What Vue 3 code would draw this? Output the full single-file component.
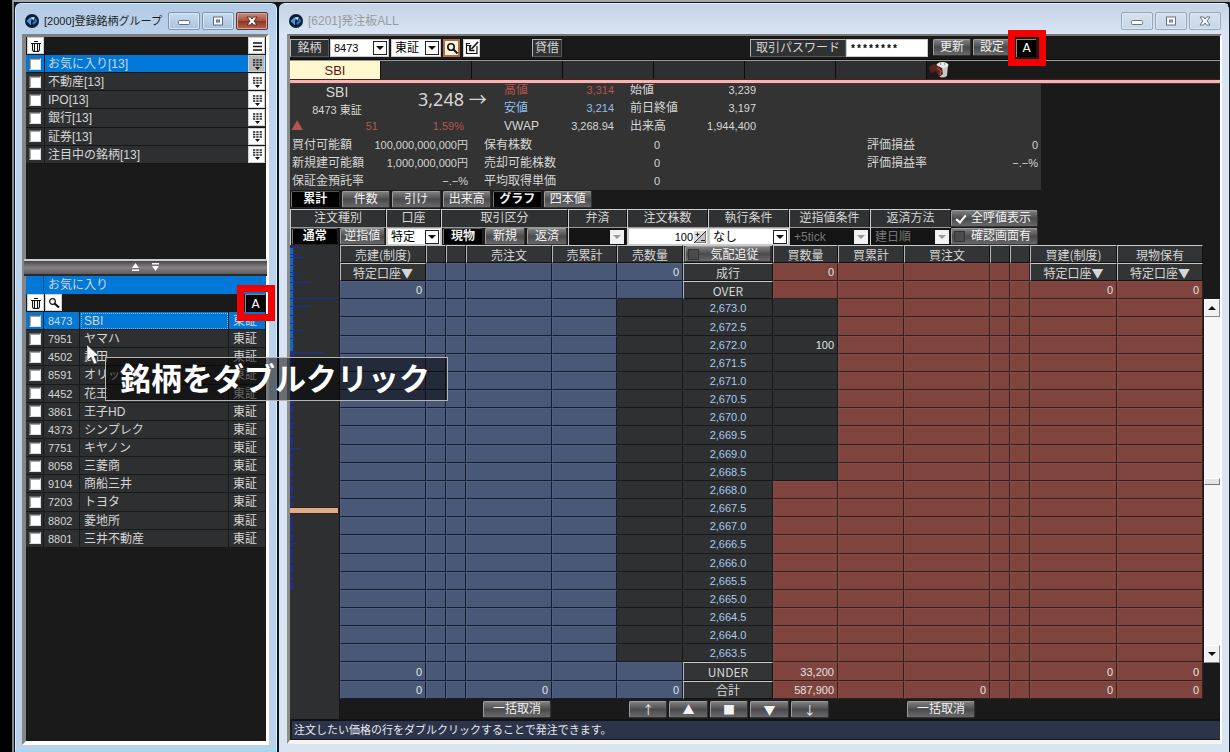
<script setup>
const groups = ['お気に入り[13]', '不動産[13]', 'IPO[13]', '銀行[13]', '証券[13]', '注目中の銘柄[13]']

const stocks = [
  ['8473', 'SBI'], ['7951', 'ヤマハ'], ['4502', '武田'], ['8591', 'オリックス'], ['4452', '花王'],
  ['3861', '王子HD'], ['4373', 'シンプレク'], ['7751', 'キヤノン'], ['8058', '三菱商'],
  ['9104', '商船三井'], ['7203', 'トヨタ'], ['8802', '菱地所'], ['8801', '三井不動産']
]

const viewTabs = [
  { t: '累計', on: true }, { t: '件数' }, { t: '引け' }, { t: '出来高' }, { t: 'グラフ', on: true }, { t: '四本値' }
]

const heads = ['売建(制度)', '', '', '売注文', '売累計', '売数量', '気配追従', '買数量', '買累計', '買注文', '', '', '買建(制度)', '現物保有']
const colNames = ['w86', 'w20', 'w20', 'w86', 'w65', 'w66', 'w90', 'w65', 'w66', 'w86', 'w20', 'w20', 'w87', 'w86']

function makeRow(center, kind, values = {}) {
  return { center, kind, values }
}
const rows = [
  makeRow('成行', 'edge', { 0: '特定口座▼', 5: '0', 7: '0', 12: '特定口座▼', 13: '特定口座▼' }),
  makeRow('OVER', 'edge', { 0: '0', 12: '0', 13: '0' })
]
for (let i = 0; i < 20; i++) {
  const price = (2673 - i * 0.5).toFixed(1)
  const label = price[0] + ',' + price.slice(1)
  rows.push(makeRow(label, i < 10 ? 'upper' : 'lower', label === '2,672.0' ? { 7: '100' } : {}))
}
rows.push(makeRow('UNDER', 'edge', { 0: '0', 7: '33,200', 12: '0', 13: '0' }))
rows.push(makeRow('合計', 'edge', { 0: '0', 3: '0', 5: '0', 7: '587,900', 9: '0', 12: '0', 13: '0' }))

function cellClass(row, c) {
  const v = row.values[c]
  if (v && v.startsWith('特定')) return 'cap'
  if (c === 6) return row.kind === 'edge' ? 'cap' : 'price'
  if (c === 5 && row.kind !== 'edge') return 'none'
  if (c === 7 && row.kind === 'upper') return 'none'
  return c < 6 ? 'sell' : 'buy'
}

const bars = [
  [2, 10], [12, 14], [9, 8], [20, 6], [27, 7], [31, 5], [37, 20], [45, 4], [53, 48], [61, 20], [70, 5], [78, 4],
  [85, 14], [93, 4], [107, 34], [116, 5], [126, 6], [135, 4], [143, 5], [151, 4], [158, 4], [164, 3], [172, 3],
  [178, 5], [186, 3], [192, 3], [203, 10], [211, 3], [217, 3], [228, 2], [240, 2], [251, 5], [258, 2], [274, 3],
  [281, 3], [290, 3], [298, 6], [304, 3], [312, 2], [320, 3], [326, 2], [334, 3], [342, 3]
]
const moves = ['↑', '▲', '■', '▼', '↓']
</script>

<template>
  <div class="desktop">
    <main class="workspace">
      <section class="window left">
        <header class="titlebar">
          <svg class="logo" viewBox="0 0 14 14"><circle cx="7" cy="7" r="7" fill="#0c1c36" /><path d="M1.500 7 5 3.500h3L6 7v4.500z" fill="#4a97d2" /><path d="M9 2.500 12.500 7 9 11 7 9l2.500-2.500z" fill="#2c6fb4" /><path d="M6 3.500 9.500 3 8.500 6.500z" fill="#d5ecfa" /></svg>
          <h1>[2000]登録銘柄グループ</h1>
          <div class="winbtns">
            <button aria-label="最小化"><svg viewBox="0 0 14 10"><rect x="1.500" y="4.500" width="11" height="4" rx="1" fill="#fff" stroke="#5a6c84" /></svg></button>
            <button aria-label="最大化"><svg viewBox="0 0 14 10"><rect x="2.500" y="1" width="9" height="8" fill="#fff" stroke="#5a6c84" /><rect x="5.500" y="4" width="3" height="2" fill="#9db5d0" stroke="#5a6c84" /></svg></button>
            <button class="close" aria-label="閉じる"><svg viewBox="0 0 14 10"><path d="M2 1h3.500L7 3l1.500-2H12L9 5l3 4H8.500L7 7 5.500 9H2l3-4z" fill="#fff" stroke="#5c2a22" /></svg></button>
          </div>
        </header>
        <div class="client">
          <div class="upper">
            <div class="tools">
              <button class="ico" aria-label="削除"><svg viewBox="0 0 14 14"><path d="M5 2.500h4M2 4.500h10M3.500 5v6l1 1.500h5l1-1.500V5M5.500 5v7M8.500 5v7" fill="none" stroke="#111" stroke-width="1.100" /></svg></button>
              <button class="ico" aria-label="メニュー"><svg viewBox="0 0 14 14"><path d="M3 4h9M3 7.500h9M3 11h9" stroke="#111" stroke-width="1.500" /></svg></button>
            </div>
            <ul class="groups">
              <li v-for="(g, i) in groups" :key="g" :class="{ sel: i === 0 }">
                <label class="chk"><input type="checkbox" :aria-label="g" /></label>
                <span class="gname">{{ g }}</span>
                <button class="ico pick" aria-label="一覧を開く"><svg viewBox="0 0 14 14"><path d="M3 3h9M3 5.500h9M3 8h9" stroke="#222" stroke-width="1.500" stroke-dasharray="2.300 1" /><path d="M5 10h5l-2.500 3z" fill="#111" /></svg></button>
              </li>
            </ul>
          </div>
          <div class="splitter">
            <svg viewBox="0 0 9 9"><path d="M4.500 0 8 5H1zM1 6.500h7v1.500H1z" fill="#fff" /></svg>
            <svg viewBox="0 0 9 9"><path d="M1 0h7v1.500H1zM1 3h7L4.500 8z" fill="#fff" /></svg>
          </div>
          <div class="lower">
            <div class="lhead"><span></span><h2>お気に入り</h2></div>
            <div class="tools">
              <button class="ico" aria-label="削除"><svg viewBox="0 0 14 14"><path d="M5 2.500h4M2 4.500h10M3.500 5v6l1 1.500h5l1-1.500V5M5.500 5v7M8.500 5v7" fill="none" stroke="#111" stroke-width="1.100" /></svg></button>
              <button class="ico" aria-label="検索"><svg viewBox="0 0 14 14"><circle cx="5.500" cy="5.500" r="2.800" fill="none" stroke="#111" stroke-width="1.200" /><path d="M7.500 7.500 12 11.500" stroke="#111" stroke-width="2.200" /></svg></button>
              <button class="abox">A<i class="mark"></i></button>
            </div>
            <table class="stocks">
              <colgroup><col class="c1" /><col class="c2" /><col class="c3" /><col class="c4" /></colgroup>
              <tbody>
                <tr v-for="(s, i) in stocks" :key="s[0]" :class="{ sel: i === 0 }">
                  <td><label class="chk"><input type="checkbox" :aria-label="s[1]" /></label></td>
                  <td class="code">{{ s[0] }}</td>
                  <td class="sname">{{ s[1] }}</td>
                  <td>東証</td>
                </tr>
              </tbody>
            </table>
          </div>
        </div>
      </section>

      <section class="window right">
        <header class="titlebar">
          <svg class="logo" viewBox="0 0 14 14"><circle cx="7" cy="7" r="7" fill="#0c1c36" /><path d="M1.500 7 5 3.500h3L6 7v4.500z" fill="#4a97d2" /><path d="M9 2.500 12.500 7 9 11 7 9l2.500-2.500z" fill="#2c6fb4" /><path d="M6 3.500 9.500 3 8.500 6.500z" fill="#d5ecfa" /></svg>
          <h1>[6201]発注板ALL</h1>
          <div class="winbtns">
            <button aria-label="最小化"><svg viewBox="0 0 14 10"><rect x="1.500" y="4.500" width="11" height="4" rx="1" fill="#fff" stroke="#667286" /></svg></button>
            <button aria-label="最大化"><svg viewBox="0 0 14 10"><rect x="2.500" y="1" width="9" height="8" fill="#fff" stroke="#667286" /><rect x="5.500" y="4" width="3" height="2" fill="#c9d6e6" stroke="#667286" /></svg></button>
            <button aria-label="閉じる"><svg viewBox="0 0 14 10"><path d="M2 1h3.500L7 3l1.500-2H12L9 5l3 4H8.500L7 7 5.500 9H2l3-4z" fill="#fff" stroke="#667286" /></svg></button>
          </div>
        </header>
        <div class="client">
          <div class="bar">
            <label class="tag w39" for="code">銘柄</label>
            <span class="sel-box w59"><select id="code"><option>8473</option></select><i class="arr"></i></span>
            <span class="sel-box w50"><select aria-label="市場"><option>東証</option></select><i class="arr"></i></span>
            <button class="ico hot" aria-label="検索"><svg viewBox="0 0 14 14"><circle cx="6" cy="6" r="3.200" fill="none" stroke="#111" stroke-width="1.600" /><path d="M8.500 8.500 12.500 12.500" stroke="#111" stroke-width="2" /></svg></button>
            <button class="ico" aria-label="編集"><svg viewBox="0 0 14 14"><path d="M5 2.500H1.500v10h10.500V5M1.500 4.500h5" fill="none" stroke="#111" stroke-width="1.200" /><path d="M13 1 6.500 8M5 5v4.500h4.500" fill="none" stroke="#111" stroke-width="1.700" /></svg></button>
            <span class="tag lend">貸借</span>
            <label class="tag pwl" for="pw">取引パスワード</label>
            <input id="pw" class="pw" type="text" value="********" />
            <button class="btn w38">更新</button>
            <button class="btn w38 gap2">設定</button>
            <button class="abox big">A<i class="mark"></i></button>
          </div>
          <nav class="tabs">
            <button class="tab on">SBI</button>
            <span v-for="n in 6" :key="n" class="tab"></span>
            <svg class="bin" viewBox="0 0 22 17"><path d="M8 4h11l-1 11q-5 3-8 0z" fill="#c9c7c4" /><ellipse cx="13.500" cy="4" rx="6" ry="3" fill="#eceae6" /><path d="M11 3h1M15 3h1" stroke="#444" /><path d="M0 6 5 3l8 4 1 6-4 3-3-6-5 2z" fill="#5e211d" /><path d="M8 7l4 3-1 4" stroke="#b06a60" fill="none" /></svg>
          </nav>
          <div class="rule"></div>

          <div class="info">
            <div class="quote">
              <div class="name"><b>SBI</b><span>8473 東証</span></div>
              <div class="last">3,248 <i>→</i></div>
              <div class="chg red"><span class="tri">▲</span><span class="num">51</span><span class="num">1.59%</span></div>
            </div>
            <dl class="q1">
              <div class="red"><dt>高値</dt><dd>3,314</dd></div>
              <div class="blue"><dt>安値</dt><dd>3,214</dd></div>
              <div><dt>VWAP</dt><dd>3,268.94</dd></div>
            </dl>
            <dl class="q2">
              <div><dt>始値</dt><dd>3,239</dd></div>
              <div><dt>前日終値</dt><dd>3,197</dd></div>
              <div><dt>出来高</dt><dd>1,944,400</dd></div>
            </dl>
            <dl class="a1">
              <div><dt>買付可能額</dt><dd>100,000,000,000円</dd></div>
              <div><dt>新規建可能額</dt><dd>1,000,000,000円</dd></div>
              <div><dt>保証金預託率</dt><dd>−.−%</dd></div>
            </dl>
            <dl class="a2">
              <div><dt>保有株数</dt><dd>0</dd></div>
              <div><dt>売却可能株数</dt><dd>0</dd></div>
              <div><dt>平均取得単価</dt><dd>0</dd></div>
            </dl>
            <dl class="a3">
              <div><dt>評価損益</dt><dd>0</dd></div>
              <div><dt>評価損益率</dt><dd>−.−%</dd></div>
            </dl>
          </div>

          <div class="views">
            <button v-for="v in viewTabs" :key="v.t" class="btn" :class="{ on: v.on }">{{ v.t }}</button>
          </div>

          <div class="form">
            <div class="f g96"><span class="fh">注文種別</span><div class="fb"><button class="btn on">通常</button><button class="btn">逆指値</button></div></div>
            <div class="f g55"><label class="fh" for="acct">口座</label><div class="fb"><span class="sel-box"><select id="acct"><option>特定</option></select><i class="arr"></i></span></div></div>
            <div class="f g127"><span class="fh">取引区分</span><div class="fb"><button class="btn on">現物</button><button class="btn">新規</button><button class="btn">返済</button></div></div>
            <div class="f g59"><label class="fh" for="rep">弁済</label><div class="fb"><span class="sel-box off"><select id="rep" disabled><option></option></select><i class="arr"></i></span></div></div>
            <div class="f g81"><label class="fh" for="qty">注文株数</label><div class="fb"><span class="sel-box"><input id="qty" type="text" value="100" /><svg class="spin" viewBox="0 0 12 12"><rect width="12" height="12" fill="#ddd" /><path d="M0 12 12 0v12z" fill="#c4c4c4" stroke="#333" /><path d="M1.500 3.500h4M3.500 1.500v4M7 9.500h4" stroke="#222" /></svg></span></div></div>
            <div class="f g81"><label class="fh" for="cond">執行条件</label><div class="fb"><span class="sel-box"><select id="cond"><option>なし</option></select><i class="arr"></i></span></div></div>
            <div class="f g81"><label class="fh" for="stop">逆指値条件</label><div class="fb"><span class="sel-box off"><select id="stop" disabled><option>+5tick</option></select><i class="arr"></i></span></div></div>
            <div class="f g81"><label class="fh" for="ret">返済方法</label><div class="fb"><span class="sel-box off"><select id="ret" disabled><option>建日順</option></select><i class="arr"></i></span></div></div>
            <div class="opts">
              <label class="btn opt"><input type="checkbox" checked /><span>全呼値表示</span></label>
              <label class="btn opt"><input type="checkbox" /><span>確認画面有</span></label>
            </div>
          </div>

          <div class="board">
            <div class="chart">
              <svg viewBox="0 0 50 474" preserveAspectRatio="none">
                <rect x="0" y="2" width="3" height="104" fill="#1668b4" />
                <path d="M3.500 3V110" stroke="#1b2fa8" stroke-dasharray="5 3" />
                <path d="M1.500 106V346" stroke="#1b2fa8" stroke-width="2" stroke-dasharray="4 3 7 2" />
                <rect v-for="b in bars" :key="b[0]" x="0" :y="b[0]" :width="b[1]" height="1" fill="#1a2ea6" />
                <rect x="0" y="262" width="49" height="7" fill="#4a1a18" />
                <rect x="0" y="263" width="48" height="5" fill="#d9b089" />
              </svg>
            </div>
            <div class="main">
              <div class="gridwrap">
                <table class="ladder">
                  <colgroup><col v-for="(w, i) in colNames" :key="i" :class="w" /></colgroup>
                  <thead>
                    <tr>
                      <th v-for="(h, i) in heads" :key="i" :class="{ follow: i === 6 }">
                        <label v-if="i === 6" class="btn opt"><input type="checkbox" /><span>{{ h }}</span></label>
                        <template v-else>{{ h }}</template>
                      </th>
                    </tr>
                  </thead>
                  <tbody>
                    <tr v-for="r in rows" :key="r.center">
                      <td v-for="(h, c) in heads" :key="c" :class="cellClass(r, c)">{{ c === 6 ? r.center : r.values[c] }}</td>
                    </tr>
                  </tbody>
                </table>
                <div class="scroll">
                  <button aria-label="上へ"><i class="up"></i></button>
                  <div class="track"><span></span></div>
                  <button aria-label="下へ"><i class="down"></i></button>
                </div>
              </div>
              <div class="foot">
                <button class="btn cancel">一括取消</button>
                <div class="moves"><button v-for="m in moves" :key="m" class="btn">{{ m }}</button></div>
                <button class="btn cancel">一括取消</button>
              </div>
            </div>
          </div>
          <div class="status">注文したい価格の行をダブルクリックすることで発注できます。</div>
        </div>
      </section>
    </main>

    <div class="caption">銘柄をダブルクリック</div>
    <svg class="cursor" viewBox="0 0 12 20"><path d="M0 0v16l4-4 3 7 3-1-3-7h5z" fill="#fff" stroke="#333" stroke-width=".5" /></svg>
  </div>
</template>

<style>
body { margin: 0; background: #000; }
</style>

<style scoped>
* { box-sizing: border-box; }
.desktop {
  position: relative;
  height: 100vh;
  min-height: 752px;
  padding-left: 12px;
  background: #000;
  color: #d6d6d6;
  font: 12px/16px "Liberation Sans", "Noto Sans CJK JP", sans-serif;
  overflow: hidden;
}
.workspace {
  display: flex;
  gap: 2px;
  height: 100%;
  padding: 1px 0 0 1px;
  border-left: 2px solid #85878a;
  border-top: 2px solid #a4a8a8;
  background: #0b1824;
}
h1, h2, ul, dl, dd { margin: 0; padding: 0; font-weight: normal; }
button, input, select { font: inherit; color: inherit; margin: 0; padding: 0; border: 0; border-radius: 0; }
i { font-style: normal; }
svg { display: block; }

.window { display: flex; flex-direction: column; border-radius: 6px 6px 0 0; }
.left { flex: 0 0 262px; background: linear-gradient(#b3cbe5, #bcd4ec 40px, #bad1ea); border: 1px solid #d9ecfa; border-bottom: 2px solid #9fd8f5; }
.right { flex: 1; min-width: 0; background: linear-gradient(#c4d3e5, #d9e5f3 30px, #d9e4f1); border-top: 1px solid #eef5fb; border-right: 1px solid #1c2733; }
.titlebar { display: flex; align-items: center; height: 30px; flex: none; padding: 4px 8px 0 9px; }
.right .titlebar { padding: 4px 8px 0 10px; }
.logo { width: 14px; height: 14px; margin-right: 5px; }
h1 { flex: 1; font-size: 11px; color: #1c1c1c; white-space: nowrap; }
.right h1 { font-size: 12px; color: #999b9f; }
.winbtns { display: flex; gap: 2px; }
.winbtns button { width: 32px; height: 18px; display: grid; place-items: center; border: 1px solid #7d93ae; border-radius: 2px; background: linear-gradient(#c9dbee, #a9c2de); box-shadow: inset 0 0 0 1px #d9e7f5; }
.winbtns svg { width: 14px; height: 10px; }
.winbtns .close { background: linear-gradient(#c98f83, #a34f3d 50%, #8c3421 50%, #b5654f); border-color: #5a3535; box-shadow: inset 0 0 0 1px #d4a59b; }
.right .winbtns button { background: linear-gradient(#d6e1ee, #c8d6e7); border-color: #98a6b8; }
.client { flex: 1; min-height: 0; display: flex; flex-direction: column; background: #1a1a1a; }
.left .client { margin: 0 7px 5px 6px; border: solid; border-width: 3px 3px 4px 4px; border-color: #808080 #fff #fff #858585; }
.right .client { margin: 0 7px 8px 8px; border: solid; border-width: 2px 2px 4px 3px; border-color: #777 #fff #f4f4f4 #8d8d8a; }

.ico { flex: none; width: 17px; height: 17px; background: #fff; border: 1px solid #cfcfcf; display: grid; place-items: center; }
.ico svg { width: 14px; height: 14px; }
.upper { height: 222px; flex: none; }
.tools { display: flex; height: 18px; gap: 1px; padding: 0 1px; }
.upper .tools { justify-content: space-between; }
.groups { list-style: none; height: 109px; display: grid; grid-template-rows: repeat(6, 1fr); }
.groups li { display: grid; grid-template-columns: 18px 1fr 19px; border-bottom: 1px solid #171717; background: #2e2f31; align-items: start; }
.groups .sel, .stocks .sel td { background: #0078d7; }
.gname { padding-left: 3px; border-left: 1px solid #1a1b1c; line-height: 17px; padding-top: 1px; height: 17px; }
.pick { margin-left: 1px; }
.sel .pick { background: #b8b8b8; }
.chk { display: grid; place-items: center; height: 17px; }
.chk input { appearance: none; width: 12px; height: 12px; background: #fff; border: 1px solid; border-color: #666 #ddd #ddd #666; box-shadow: inset 1px 1px #a5a5a5; }
.splitter { flex: none; display: flex; align-items: center; justify-content: center; gap: 11px; height: 17px; margin: 0 -1px 0 -2px; border-top: 2px solid #ccc; border-bottom: 2px solid #2b2a2b; background: linear-gradient(#4a484a, #858185, #605c60); }
.splitter svg { width: 9px; height: 9px; }
.lower { flex: 1; }
.lhead { display: grid; grid-template-columns: 17px 1fr; height: 18px; background: #0078d7; }
.lhead h2 { font-size: 12px; line-height: 18px; padding-left: 4px; border-left: 1px solid #0a4f8c; }
.lower .tools .abox { margin-left: auto; }
.abox { position: relative; width: 20px; height: 18px; background: #000; color: #fff; font: 12px/16px "DejaVu Sans", sans-serif; border-top: 1px solid #888; border-left: 1px solid #888; }
.mark { position: absolute; inset: -10px -10px -9px -9px; border: 7px solid #f40000; z-index: 3; pointer-events: none; }
table { border-collapse: separate; border-spacing: 0; table-layout: fixed; width: 100%; }
.stocks { height: 236px; }
.c1 { width: 18px; } .c2 { width: 36px; } .c3 { width: 149px; } .c4 { width: 37px; }
.stocks td { padding: 1px 0 0 4px; background: #2e2f31; border: solid #18191a; border-width: 0 1px 1px 0; white-space: nowrap; line-height: 16px; overflow: hidden; }
.stocks td:first-child { padding: 0; }
.stocks .chk { height: 17px; }
.stocks .code, dd, .num { font-size: 11px; }
.stocks .sel .sname { outline: 1px dotted #7fbcf0; outline-offset: -2px; }

.bar { display: flex; align-items: center; height: 24px; flex: none; border-bottom: 1px solid #0c0c0c; }
.tag { flex: none; height: 18px; text-align: center; line-height: 16px; background: #303132; border: solid; border-width: 1px; border-color: #b5b5b5 #555 #555 #b5b5b5; white-space: nowrap; }
.w39 { width: 39px; } .w59 { width: 59px; margin: 0 2px 0 1px; } .w50 { width: 50px; margin-right: 2px; } .w38 { width: 38px; }
.bar .ico { margin-right: 3px; height: 18px; }
.bar .hot { background: #fdf6d8; border: 2px solid #b06a50; }
.lend { width: 30px; margin-left: 49px; }
.pwl { width: 96px; margin-left: auto; }
.pw { width: 82px; flex: none; height: 18px; padding: 3px 0 0 3px; background: #fff; color: #000; font: bold 10px/14px "Liberation Mono", monospace; margin-right: 5px; border: 1px solid #ccc; }
.gap2 { margin: 0 5px 0 2px; }
.bar .abox { margin-right: 184px; flex: none; }
.sel-box { position: relative; display: flex; height: 18px; background: #fff; color: #000; border: 1px solid #ccc; min-width: 0; }
.sel-box select, .sel-box input { flex: 1; min-width: 0; width: 100%; appearance: none; background: none; padding-left: 3px; opacity: 1; }
.sel-box #code { font-size: 11px; }
.sel-box input { text-align: right; padding-right: 14px; font-size: 11px; }
.arr { position: absolute; right: 1px; top: 1px; width: 14px; height: 14px; border: 1px solid #222; background: #fff; pointer-events: none; }
.arr::after { content: ""; position: absolute; left: 2px; top: 4px; border: 4px solid transparent; border-top-color: #111; }
.off { background: #141414; color: #777; border-color: #141414; }
.off .arr { border-color: #eee; background: #f2f2f2; }
.off .arr::after { border-top-color: #999; }
.spin { position: absolute; right: 1px; top: 2px; width: 12px; height: 12px; }

.btn { height: 17px; text-align: center; line-height: 15px; color: #f2f2f2; background: linear-gradient(#7f7f80, #4b4b4d 50%, #68686a); border: 1px solid; border-color: #9c9c9c #333 #333 #9c9c9c; border-radius: 2px; white-space: nowrap; }
.btn.on { background: #000; border-color: #555 #222 #222 #777; font-weight: bold; }
.tabs { display: flex; height: 19px; flex: none; border-top: 1px solid #9a9a9a; }
.tab { flex: none; width: 91px; border-right: 1px solid #0c0c0c; background: #2e2f31; line-height: 17px; }
.tab.on { background: #fff8cf; color: #5b1414; font-size: 13px; border-right: 1px solid #111; }
.bin { width: 22px; height: 17px; margin-left: 2px; }
.rule { position: relative; z-index: 1; flex: none; height: 5px; background: #f3b6b4; border: solid; border-width: 1px 0; border-color: #4a2020 #1a1a1a #5b2a2a; }

.info { flex: none; height: 109px; margin-top: -3px; width: 751px; max-width: 100%; background: #333; display: grid; grid-template-rows: minmax(0, 1fr) minmax(0, 1fr); grid-template-columns: 192px 22px 126px 126px 114px 171px; }
.info > * { grid-row: 1; }
.quote { grid-column: 1 / 3; display: grid; grid-template-columns: 88px 1fr; grid-template-rows: minmax(0, 2fr) minmax(0, 1fr); }
.name { display: flex; flex-direction: column; text-align: center; padding: 3px 0 0 6px; line-height: 18px; font-size: 11px; }
.name b { font: 14px/17px "Liberation Sans", sans-serif; }
.last { font: 18px/36px "Noto Sans", sans-serif; padding-left: 40px; white-space: nowrap; }
.last i { font: 18px/32px "Noto Sans CJK JP", sans-serif; }
.chg { grid-column: 1 / 3; display: grid; grid-template-columns: 16px 72px 86px; padding-left: 1px; }
.chg .num { text-align: right; line-height: 18px; padding-right: 1px; }
.tri { font: 12px/18px "Noto Sans CJK JP", sans-serif; }
dl { display: grid; grid-template-rows: repeat(3, minmax(0, 1fr)); }
dl div { display: flex; justify-content: space-between; align-items: center; white-space: nowrap; }
dt { line-height: 16px; }
.red { color: #b4554e; }
.blue { color: #8fc0ef; }
.info .q1 { grid-column: 3; width: 110px; }
.info .q2 { grid-column: 4; width: 126px; }
.info .a1, .info .a2, .info .a3 { grid-row: 2; width: 176px; }
.info .a1 { grid-column: 1; margin-left: 2px; }
.info .a2 { grid-column: 1 / 6; margin-left: 194px; }
.info .a3 { grid-column: 5 / 7; width: 171px; margin-left: 111px; }

.views { flex: none; display: grid; grid-template-columns: repeat(6, 1fr); gap: 2px; width: 302px; height: 19px; padding: 1px 0 0 1px; }
.form { flex: none; display: flex; height: 36px; }
.f { display: flex; flex-direction: column; min-width: 0; border-left: 1px solid #ccc; }
.fh { height: 18px; border-top: 1px solid #d0d0d0; border-right: 1px solid #111; background: #303132; text-align: center; line-height: 16px; white-space: nowrap; }
.fb { display: flex; height: 18px; gap: 2px; border-top: 1px solid #999; padding: 0 1px; }
.fb > * { flex: 1; }
.fb .btn { height: 17px; }
.fb .sel-box { height: 17px; }
.g96 { width: 96px; } .g55 { width: 55px; } .g127 { width: 127px; } .g59 { width: 59px; } .g81 { width: 81px; }
.g55 .fb, .g81 .fb { padding: 0; }
.opts { display: flex; flex-direction: column; gap: 1px; width: 87px; padding-top: 1px; }
.opt { display: flex; align-items: center; }
.opt input { appearance: none; width: 11px; height: 11px; margin-left: 2px; background: #4c4c4d; border: 1px solid #333; position: relative; }
.opt input:checked { border-color: transparent; background: none; }
.opt input:checked::after { content: ""; position: absolute; left: 1px; top: 1px; width: 8px; height: 4px; border: solid #fff; border-width: 0 0 2px 2px; transform: rotate(-50deg); }
.opt span { flex: 1; text-align: center; }

.board { flex: 1; min-height: 0; display: flex; }
.chart { flex: none; width: 50px; background: #2d2f31; border-right: 1px solid #151515; }
.chart svg { width: 50px; height: 474px; }
.main { flex: 1; min-width: 0; }
.gridwrap { display: flex; }
.ladder { flex: 1; height: 454px; min-width: 0; }
.w86 { width: 86px; } .w20 { width: 20px; } .w65 { width: 65px; } .w66 { width: 66px; } .w90 { width: 90px; } .w87 { width: 87px; }
.ladder th, .ladder td { padding: 0 3px 0 2px; font-weight: normal; line-height: 16px; white-space: nowrap; overflow: hidden; border: solid; border-width: 1px; }
.ladder td { text-align: right; font-size: 11px; color: #e2e2e2; }
.ladder th, .ladder td.cap { padding: 0; text-align: center; background: #333435; font: 12px/15px "Noto Sans CJK JP", sans-serif; border-color: #c9c9c9 #111 #111 #b5b5b5; color: #d6d6d6; }
.ladder .sell { background: #4a5878; border-color: #525f7e #141c30 #141c30 #525f7e; }
.ladder .buy { background: #80443f; border-color: #874b46 #30201f #30201f #874b46; }
.ladder .none, .ladder .price { background: #2e3032; border-color: #2e3032 #17181a #17181a #2e3032; }
.ladder .price { text-align: center; color: #a9cbee; padding: 0; }
.ladder .follow { padding: 0 1px; }
.follow .btn { height: 16px; line-height: 14px; }
.scroll { flex: none; width: 17px; margin: 54px 0 36px; padding-left: 1px; display: flex; flex-direction: column; }
.scroll button { height: 18px; background: #f2f2f2; display: grid; place-items: center; border: 1px solid; border-color: #fff #888 #888 #fff; }
.scroll i { border: 4px solid transparent; }
.scroll .up { border-bottom-color: #111; border-top: 0; }
.scroll .down { border-top-color: #111; border-bottom: 0; }
.track { flex: 1; background: #f6f6f6; padding-top: 161px; }
.track span { display: block; height: 7px; background: #e4e4e4; border: 1px solid; border-color: #fff #777 #777 #fff; }
.foot { display: flex; gap: 78px; padding: 2px 0 0 143px; }
.foot .cancel { width: 68px; }
.moves { display: grid; grid-template-columns: repeat(5, 1fr); gap: 2px; width: 200px; font-family: "Noto Sans CJK JP", sans-serif; }
.status { flex: none; height: 20px; margin: 0 0 1px 2px; padding-left: 2px; border-top: 2px solid #101216; background: #2c344a; font-size: 11px; line-height: 18px; color: #e6e9f0; }

.caption { position: absolute; z-index: 5; left: 105px; top: 357px; width: 343px; height: 44px; padding-left: 14px; border: 1px solid #b5b5b5; background: rgba(0, 0, 0, .52); color: #fff; font: bold 31px/38px "Noto Sans CJK JP", sans-serif; white-space: nowrap; }
.cursor { position: absolute; z-index: 6; left: 87px; top: 345px; width: 12px; height: 20px; }
</style>
